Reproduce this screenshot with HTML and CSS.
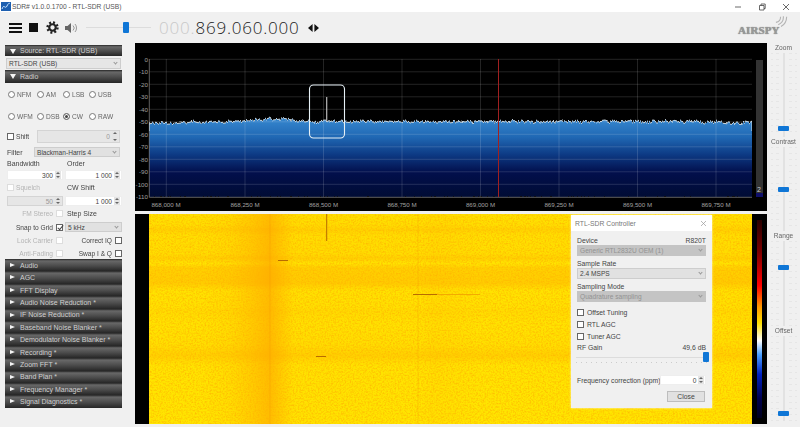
FILE: index.html
```html
<!DOCTYPE html>
<html lang="en">
<head>
<meta charset="utf-8">
<title>SDR#</title>
<link rel="stylesheet" href="styles.css">
</head>
<body>
<div class="app">
  <header class="titlebar">
    <svg class="appicon" viewBox="0 0 10 9"><rect width="10" height="9" fill="#1d5fb0"/><path d="M1 7 C3 1 4 8 6 4 S8 2 9 1" fill="none" stroke="#cfe6ff" stroke-width="1"/></svg>
    <span class="titletext">SDR# v1.0.0.1700 - RTL-SDR (USB)</span>
    <div class="winctl">
      <svg viewBox="0 0 8 8"><path d="M1 4H7" stroke="#444" stroke-width=".8"/></svg>
      <svg viewBox="0 0 8 8"><path d="M1.5 2.5H6V7H1.5ZM3 2.5V1H7.2V5.5H6" fill="none" stroke="#444" stroke-width=".8"/></svg>
      <svg viewBox="0 0 8 8"><path d="M1 1L7 7M7 1L1 7" stroke="#444" stroke-width=".8"/></svg>
    </div>
  </header>

  <div class="toolbar">
    <svg class="ic-menu" viewBox="0 0 13 10"><path d="M0 1H13M0 5H13M0 9H13" stroke="#111" stroke-width="2"/></svg>
    <div class="ic-stop"></div>
    <svg class="ic-gear" viewBox="0 0 12 12"><circle cx="6" cy="6" r="4.6" fill="none" stroke="#222" stroke-width="2.2" stroke-dasharray="1.8 1.8"/><circle cx="6" cy="6" r="3" fill="none" stroke="#222" stroke-width="2"/></svg>
    <svg class="ic-spk" viewBox="0 0 13 12"><path d="M0 4H2.5L6 1V11L2.5 8H0Z" fill="#666"/><path d="M8 3.5A3.5 3.5 0 0 1 8 8.5M10 2A6 6 0 0 1 10 10" fill="none" stroke="#999" stroke-width="1"/></svg>
    <div class="vol"><div class="vol-thumb"></div></div>
    <div class="freq"><span class="freq-dim">000.</span>869.060.000</div>
    <svg class="ic-arrows" viewBox="0 0 11 8"><path d="M0 4L4.6 0V8ZM11 4L6.4 0V8Z" fill="#111"/></svg>
    <div class="logo">
      <span class="logo-text">AIRSPY</span>
      <svg class="logo-waves" viewBox="0 0 14 14"><path d="M1 9A6 6 0 0 0 6 3M3.5 11.5A9 9 0 0 0 9 2.5M6.5 13.5A12 12 0 0 0 12.5 3" fill="none" stroke="#b4b4b4" stroke-width="1.2"/></svg>
    </div>
  </div>

  <div class="main">
    <aside class="left">
      <div class="hdr hdr-open hdr-first"><i class="tri-down"></i>Source: RTL-SDR (USB)</div>
      <div class="combo combo-source">RTL-SDR (USB)<b></b></div>
      <div class="hdr hdr-open hdr-radio"><i class="tri-down"></i>Radio</div>

      <div class="radios">
        <label class="rd"><i></i>NFM</label><label class="rd"><i></i>AM</label><label class="rd"><i></i>LSB</label><label class="rd"><i></i>USB</label>
        <label class="rd"><i></i>WFM</label><label class="rd"><i></i>DSB</label><label class="rd on"><i></i>CW</label><label class="rd"><i></i>RAW</label>
      </div>

      <div class="row row-shift"><label class="cb"><i></i>Shift</label><div class="num num-off grow">0<s></s></div></div>
      <div class="row row-filter"><span class="filter-l">Filter</span><div class="combo grow">Blackman-Harris 4<b></b></div></div>
      <div class="pair row-lab"><span>Bandwidth</span><span class="indent">Order</span></div>
      <div class="pair row-num"><div class="num">300<s></s></div><div class="num">1 000<s></s></div></div>
      <div class="pair row-lab2"><label class="cb cb-dis"><i></i>Squelch</label><span class="indent">CW Shift</span></div>
      <div class="pair row-num2"><div class="num num-off">50<s></s></div><div class="num">1 000<s></s></div></div>
      <div class="pair row-lab3"><label class="cb cb-rev cb-dis"><i></i>FM Stereo</label><span class="indent">Step Size</span></div>
      <div class="pair row-snap"><label class="cb cb-rev cb-on"><i></i>Snap to Grid</label><div class="combo">5 kHz<b></b></div></div>
      <div class="pair row-lab4"><label class="cb cb-rev cb-dis"><i></i>Lock Carrier</label><label class="cb cb-rev"><i></i>Correct IQ</label></div>
      <div class="pair row-lab4"><label class="cb cb-rev cb-dis"><i></i>Anti-Fading</label><label class="cb cb-rev"><i></i>Swap I &amp; Q</label></div>

      <div class="hdrs">
        <div class="hdr"><i class="tri-right"></i>Audio</div>
        <div class="hdr"><i class="tri-right"></i>AGC</div>
        <div class="hdr"><i class="tri-right"></i>FFT Display</div>
        <div class="hdr"><i class="tri-right"></i>Audio Noise Reduction *</div>
        <div class="hdr"><i class="tri-right"></i>IF Noise Reduction *</div>
        <div class="hdr"><i class="tri-right"></i>Baseband Noise Blanker *</div>
        <div class="hdr"><i class="tri-right"></i>Demodulator Noise Blanker *</div>
        <div class="hdr"><i class="tri-right"></i>Recording *</div>
        <div class="hdr"><i class="tri-right"></i>Zoom FFT *</div>
        <div class="hdr"><i class="tri-right"></i>Band Plan *</div>
        <div class="hdr"><i class="tri-right"></i>Frequency Manager *</div>
        <div class="hdr"><i class="tri-right"></i>Signal Diagnostics *</div>
      </div>
    </aside>

    <section class="center">
      <svg class="spectrum" viewBox="135 43 632 168">
        <defs>
          <linearGradient id="blue" x1="0" y1="120" x2="0" y2="197" gradientUnits="userSpaceOnUse">
            <stop offset="0" stop-color="#3484cc"/><stop offset=".22" stop-color="#2068b4"/><stop offset=".45" stop-color="#0d3a84"/><stop offset=".68" stop-color="#020f4c"/><stop offset="1" stop-color="#000c34"/>
          </linearGradient>
          <clipPath id="topclip"><rect x="149" y="59" width="603" height="72"/></clipPath>
          <filter id="jag" x="149" y="100" width="603" height="100" filterUnits="userSpaceOnUse" color-interpolation-filters="sRGB">
            <feTurbulence type="turbulence" baseFrequency=".7 .02" numOctaves="2" seed="8" result="n"/>
            <feColorMatrix in="n" type="matrix" values="0 0 0 0 .5  1.6 0 0 0 .1  0 0 0 0 0  0 0 0 0 1" result="m"/>
            <feDisplacementMap in="SourceGraphic" in2="m" scale="3" xChannelSelector="R" yChannelSelector="G"/>
          </filter>
          <polygon id="trace" points="149,124 153,123 157,123.5 161,122.5 165,123.5 169,123 173,123.5 177,122.5 181,122 185,123 189,122.5 193,121 197,122.5 201,123 205,122 209,122.5 213,122 217,121.5 221,122.5 225,122 229,121 233,121.5 237,122 241,121.5 245,120.5 249,121 253,120 257,119 261,120.5 265,119.5 269,118 273,120 277,119.5 281,119 285,118.5 289,119.5 293,120 297,121 301,120.5 305,122 309,121 313,122 317,122.5 321,121.5 325,121 329,122 333,120.5 337,122 341,121 345,122 349,122.5 353,121.5 357,122 361,121 365,121.5 369,120.5 373,122 377,121.5 381,122.5 385,121 389,122 393,122.5 397,121.5 401,122 405,121 409,121.5 413,122.5 417,121 421,122 425,121.5 429,122.5 433,121 437,122 441,121.5 445,120.5 449,122 453,121.5 457,122 461,121 465,122 469,121 473,122.5 477,121.5 481,122 485,121 489,122 493,121.5 497,122.5 501,121 505,122 509,121.5 513,120.5 517,122 521,121 525,122 529,121.5 533,122.5 537,121 541,122 545,121 549,122.5 553,121.5 557,122 561,120.5 565,122 569,121.5 573,122 577,121 581,122.5 585,121.5 589,122 593,120.5 597,122 601,121.5 605,121 609,122.5 613,121 617,122 621,121.5 625,122 629,120.5 633,122 637,121 641,122 645,121.5 649,122.5 653,121 657,122 661,121.5 665,120.5 669,122 673,121 677,122 681,121 685,122.5 689,121 693,122 697,121 701,122 705,123 709,121.5 713,122.5 717,121 721,122 725,122.5 729,123 733,123.5 737,123 741,123.5 745,122 749,123 752,121 752,197 149,197"/>
          <mask id="fillmask" maskUnits="userSpaceOnUse" x="149" y="59" width="603" height="139"><g filter="url(#jag)"><use href="#trace" fill="#fff"/></g></mask>
        </defs>
        <rect class="sp-bg" x="135" y="43" width="632" height="168"/>
        <rect x="149" y="100" width="603" height="97" fill="url(#blue)" mask="url(#fillmask)"/>
        <g class="grid">
          <path d="M149 59.3H752M149 71.8H752M149 84.3H752M149 96.8H752M149 109.3H752M149 121.8H752M149 134.3H752M149 146.8H752M149 159.3H752M149 171.8H752M149 184.3H752"/>
          <path d="M166.3 59V197M245 59V197M323.5 59V197M402 59V197M480.5 59V197M559 59V197M637.5 59V197M716 59V197"/>
        </g>
        <path class="axis" d="M149.3 59V197.3H752"/>
        <g clip-path="url(#topclip)"><g filter="url(#jag)"><use href="#trace" class="trace"/></g></g>
        <path class="spike" d="M326.7 97V121"/>
        <path class="redline" d="M498.5 59V197"/>
        <rect class="marker" x="309.5" y="85" width="35" height="53" rx="4"/>
        <g class="ylab">
          <text x="148" y="61.5">0</text><text x="148" y="74">-10</text><text x="148" y="86.5">-20</text><text x="148" y="99">-30</text><text x="148" y="111.5">-40</text><text x="148" y="124">-50</text><text x="148" y="136.5">-60</text><text x="148" y="149">-70</text><text x="148" y="161.5">-80</text><text x="148" y="174">-90</text><text x="148" y="186.5">-100</text><text x="148" y="199">-110</text>
        </g>
        <g class="xlab">
          <text x="166" y="207">868,000 M</text><text x="245" y="207">868,250 M</text><text x="323.5" y="207">868,500 M</text><text x="402" y="207">868,750 M</text><text x="480.5" y="207">869,000 M</text><text x="559" y="207">869,250 M</text><text x="637.5" y="207">869,500 M</text><text x="716" y="207">869,750 M</text>
        </g>
        <rect class="snr" x="756" y="60" width="7" height="137"/>
        <rect class="snr-low" x="756" y="193" width="7" height="4"/>
        <text class="snr-t" x="757" y="192">2</text>
      </svg>

      <svg class="waterfall" viewBox="135 214 632 210">
        <defs>
          <linearGradient id="vband" x1="149" x2="752" y1="0" y2="0" gradientUnits="userSpaceOnUse">
            <stop offset="0" stop-color="#ff9800" stop-opacity=".04"/><stop offset=".09" stop-color="#ff9800" stop-opacity=".05"/><stop offset=".135" stop-color="#ff9800" stop-opacity=".14"/><stop offset=".17" stop-color="#ff9800" stop-opacity=".34"/><stop offset=".2" stop-color="#ff9800" stop-opacity=".55"/><stop offset=".24" stop-color="#ff9800" stop-opacity=".08"/><stop offset=".45" stop-color="#ff9800" stop-opacity=".05"/><stop offset=".47" stop-color="#ff9800" stop-opacity=".12"/><stop offset=".55" stop-color="#ff9800" stop-opacity=".04"/><stop offset="1" stop-color="#ff9800" stop-opacity=".06"/>
          </linearGradient>
          <linearGradient id="hband" x1="0" x2="0" y1="214" y2="424" gradientUnits="userSpaceOnUse">
            <stop offset="0" stop-color="#ff9800" stop-opacity=".04"/><stop offset=".05" stop-color="#ff9800" stop-opacity=".08"/><stop offset=".075" stop-color="#ff9800" stop-opacity=".24"/><stop offset=".1" stop-color="#ff9800" stop-opacity=".08"/><stop offset=".19" stop-color="#ff9800" stop-opacity=".1"/><stop offset=".21" stop-color="#ff9800" stop-opacity=".26"/><stop offset=".235" stop-color="#ff9800" stop-opacity="0"/><stop offset=".255" stop-color="#ff9800" stop-opacity=".26"/><stop offset=".33" stop-color="#ff9800" stop-opacity=".32"/><stop offset=".365" stop-color="#ff9800" stop-opacity=".03"/><stop offset=".44" stop-color="#ff9800" stop-opacity=".05"/><stop offset=".46" stop-color="#ff9800" stop-opacity=".12"/><stop offset=".52" stop-color="#ff9800" stop-opacity=".03"/><stop offset=".62" stop-color="#ff9800" stop-opacity=".08"/><stop offset=".675" stop-color="#ff9800" stop-opacity=".26"/><stop offset=".72" stop-color="#ff9800" stop-opacity=".02"/><stop offset="1" stop-color="#ff9800" stop-opacity="0"/>
          </linearGradient>
          <linearGradient id="scale" x1="0" x2="0" y1="220" y2="418" gradientUnits="userSpaceOnUse">
            <stop offset="0" stop-color="#280000"/><stop offset=".16" stop-color="#7a0000"/><stop offset=".33" stop-color="#ff0000"/><stop offset=".44" stop-color="#ff9a00"/><stop offset=".52" stop-color="#ffe000"/><stop offset=".61" stop-color="#ffffff"/><stop offset=".68" stop-color="#4aa0ff"/><stop offset=".78" stop-color="#0020c0"/><stop offset=".9" stop-color="#000050"/><stop offset="1" stop-color="#00001c"/>
          </linearGradient>
          <filter id="noise" x="149" y="214" width="603" height="210" filterUnits="userSpaceOnUse" color-interpolation-filters="sRGB">
            <feTurbulence type="fractalNoise" baseFrequency="0.6" numOctaves="2" seed="5"/>
            <feColorMatrix type="matrix" values="0 0 0 0 1  0 0 0 0 .7  0 0 0 0 0  1.6 0 0 0 -.62"/>
          </filter>
        </defs>
        <rect class="sp-bg" x="135" y="214" width="632" height="210"/>
        <rect class="wf-base" x="149" y="214" width="603" height="210"/>
        <rect x="149" y="214" width="603" height="210" fill="url(#vband)"/>
        <rect x="149" y="214" width="603" height="210" fill="url(#hband)"/>
        <rect x="149" y="214" width="603" height="210" fill="#000" filter="url(#noise)"/>
        <path class="wf-line1" d="M418 214V424M270 214V424"/>
        <path class="wf-line3" d="M437 294.5H480"/>
        <path class="wf-line2" d="M326.7 214V241M278 260.5H288M316 356.5H326M413 294.5H437"/>
        <rect x="757" y="220" width="5" height="198" fill="url(#scale)"/>
      </svg>

      <div class="dialog">
        <div class="dlg-title"><span>RTL-SDR Controller</span><svg viewBox="0 0 7 7"><path d="M1 1L6 6M6 1L1 6" stroke="#999" stroke-width=".7"/></svg></div>
        <div class="dlg-body">
          <div class="dlg-line"><span>Device</span><span>R820T</span></div>
          <div class="combo combo-dis">Generic RTL2832U OEM (1)<b></b></div>
          <div class="dlg-line dlg-gap"><span>Sample Rate</span></div>
          <div class="combo">2.4 MSPS<b></b></div>
          <div class="dlg-line dlg-gap"><span>Sampling Mode</span></div>
          <div class="combo combo-dis">Quadrature sampling<b></b></div>
          <label class="cb dlg-cb dlg-cb1"><i></i>Offset Tuning</label>
          <label class="cb dlg-cb"><i></i>RTL AGC</label>
          <label class="cb dlg-cb"><i></i>Tuner AGC</label>
          <div class="dlg-line"><span>RF Gain</span><span>49,6 dB</span></div>
          <div class="hslider"><div class="hthumb"></div></div>
          <div class="dlg-line dlg-freq"><span class="nowrap">Frequency correction (ppm)</span><div class="num num-ppm">0<s></s></div></div>
          <button class="close" type="button">Close</button>
        </div>
      </div>
    </section>

    <aside class="right">
      <div class="vlabel">Zoom</div><div class="vtrack t84"><div class="vthumb th-zoom"></div></div>
      <div class="vlabel">Contrast</div><div class="vtrack t84"><div class="vthumb th-contrast"></div></div>
      <div class="vlabel">Range</div><div class="vtrack t85"><div class="vthumb th-range"></div></div>
      <div class="vlabel">Offset</div><div class="vtrack t85"><div class="vthumb th-offset"></div></div>
    </aside>
  </div>
</div>
</body>
</html>
```

FILE: styles.css
```css
* { box-sizing: border-box; }
html, body { margin: 0; padding: 0; }
body { width: 800px; height: 427px; overflow: hidden; font-family: "Liberation Sans", Arial, sans-serif; font-size: 7px; color: #444; background: #f0f0f0; }
.app { width: 800px; height: 427px; display: flex; flex-direction: column; filter: blur(.3px); }
.nowrap { white-space: nowrap; }

.titlebar { height: 12px; flex: none; background: #fff; display: flex; align-items: center; padding-left: 1px; }
.appicon { width: 10px; height: 9px; }
.titletext { margin-left: 1px; font-size: 6.7px; color: #555; }
.winctl { margin-left: auto; display: flex; gap: 16px; padding-right: 10px; padding-top: 1px; }
.winctl svg { width: 8px; height: 8px; }

.toolbar { height: 31px; flex: none; display: flex; align-items: center; padding-left: 9px; background: #f0f0f0; }
.ic-menu { width: 13px; height: 10px; }
.ic-stop { width: 9px; height: 9px; background: #111; margin-left: 7px; }
.ic-gear { width: 13px; height: 13px; margin-left: 8px; }
.ic-spk { width: 13px; height: 12px; margin-left: 6px; }
.vol { position: relative; width: 65px; height: 1px; background: #dcdcdc; margin-left: 8px; }
.vol-thumb { position: absolute; left: 37px; top: -5px; width: 6px; height: 11px; background: #0f76d6; border-radius: 1px; }
.freq { margin-left: 8px; font-family: "Open Sans", sans-serif; font-size: 17px; font-weight: 300; letter-spacing: .8px; color: #222; white-space: nowrap; width: 148px; }
.freq-dim { color: #c8c8c8; }
.ic-arrows { width: 11px; height: 8px; margin-left: 1px; }
.logo { position: relative; margin-left: auto; margin-right: 20px; margin-top: -2px; width: 42px; height: 18px; }
.logo-text { position: absolute; left: 0; bottom: 0; font-family: "Liberation Serif", serif; font-weight: 700; font-size: 11px; line-height: 12px; letter-spacing: .1px; color: #999; text-shadow: 0 0 1px #666; }
.logo-waves { position: absolute; right: -8px; top: -4px; width: 13px; height: 13px; }

.main { flex: 1; display: flex; min-height: 0; }
.left { width: 135px; flex: none; padding: 0 13px 0 5px; display: flex; flex-direction: column; }
.hdr { height: 12.42px; flex: none; display: flex; align-items: center; padding-left: 15px; font-size: 7px; color: #d0d0d0; background: linear-gradient(#252525 0, #686868 16%, #4c4c4c 55%, #262626 100%); position: relative; white-space: nowrap; }
.hdr-first { margin-top: 2px; height: 11px; }
.hdr-radio { margin-top: 1px; height: 13px; }
.tri-down, .tri-right { position: absolute; display: block; width: 0; height: 0; }
.tri-down { left: 5px; top: 4px; border-left: 3px solid transparent; border-right: 3px solid transparent; border-top: 5px solid #f4f4f4; }
.tri-right { left: 5px; top: 4px; border-top: 2.5px solid transparent; border-bottom: 2.5px solid transparent; border-left: 5px solid #f4f4f4; }

.combo { position: relative; height: 10px; background: #e1e1e1; border: 1px solid #cdcdcd; display: flex; align-items: center; padding-left: 2px; font-size: 6.6px; color: #444; white-space: nowrap; }
.combo b { position: absolute; right: 3px; top: 2px; width: 3px; height: 3px; border-right: 1px solid #999; border-bottom: 1px solid #999; transform: rotate(45deg); }
.combo-source { margin: 2px 1px 0 1px; height: 11px; background: #e6e6e6; }
.combo-dis { background: #c4c4c4; border-color: #c4c4c4; color: #929292; }

.radios { height: 44px; flex: none; padding-left: 3px; display: grid; grid-template-columns: 29px 26px 26px 1fr; grid-template-rows: 22px 22px; align-items: center; }
.rd { display: flex; align-items: center; gap: 2px; color: #666; font-size: 6.6px; }
.rd i { width: 7px; height: 7px; border-radius: 50%; border: 1px solid #777; background: #fff; display: block; flex: none; }
.rd.on i { background: #444; box-shadow: inset 0 0 0 1px #fff; }

.row { display: flex; align-items: center; flex: none; }
.grow { flex: 1; }
.cb { display: flex; align-items: center; gap: 2px; font-size: 6.6px; color: #444; white-space: nowrap; }
.cb i { width: 7px; height: 7px; display: block; flex: none; background: #fff; border: 1px solid #666; position: relative; }
.cb-rev { flex-direction: row-reverse; justify-content: flex-start; gap: 3px; }
.cb-dis { color: #b4b4b4; }
.cb-dis i { border-color: #ddd; }
.cb-on i::after { content: ""; position: absolute; left: 1.5px; top: -1px; width: 2px; height: 5px; border-right: 1px solid #444; border-bottom: 1px solid #444; transform: rotate(40deg); }

.num { position: relative; height: 10px; background: #fff; border: 1px solid #eee; display: flex; align-items: center; justify-content: flex-end; padding-right: 9px; font-size: 6.6px; color: #444; }
.num s { position: absolute; right: 1px; top: 0; bottom: 0; width: 6px; background: #e4e4e4; }
.num s::before { content: ""; position: absolute; left: 1px; top: 1px; border-left: 2px solid transparent; border-right: 2px solid transparent; border-bottom: 2.5px solid #666; }
.num s::after { content: ""; position: absolute; left: 1px; bottom: 1px; border-left: 2px solid transparent; border-right: 2px solid transparent; border-top: 2.5px solid #666; }
.num-off { background: #e6e6e6; border-color: #d4d4d4; color: #999; }

.row-shift { margin-top: 3px; height: 13px; padding: 0 2px; gap: 8px; }
.row-shift .num { height: 13px; }
.row-filter { margin-top: 4px; height: 10px; padding: 0 2px; }
.filter-l { width: 27px; }
.pair { display: grid; grid-template-columns: 56px 57px; gap: 0 2px; padding-left: 2px; align-items: center; flex: none; }
.indent { padding-left: 2px; }
.row-lab { margin-top: 1px; height: 10px; }
.row-num { margin-top: 2px; height: 10px; }
.row-num .num, .row-num2 .num { height: 10px; }
.row-lab2 { margin-top: 2px; height: 10px; }
.row-num2 { margin-top: 4px; height: 10px; }
.row-lab3 { margin-top: 2px; height: 10px; }
.row-snap { margin-top: 4px; height: 10px; }
.row-lab4 { margin-top: 3px; height: 10px; }
.hdrs { margin-top: 1px; display: flex; flex-direction: column; }

.center { position: relative; width: 632px; flex: none; display: flex; flex-direction: column; }
.spectrum { display: block; width: 632px; height: 168px; flex: none; }
.waterfall { display: block; width: 632px; height: 210px; flex: none; margin-top: 3px; }
.sp-bg { fill: #000; }
.grid path { stroke: #fff; stroke-opacity: .2; stroke-width: .7; fill: none; }
.axis { stroke: #777; stroke-width: .8; fill: none; }
.trace { fill: none; stroke: #e2ecf2; stroke-width: .9; }
.spike { stroke: #b8b8b8; stroke-width: 1.2; fill: none; }
.redline { stroke: #a02020; stroke-width: 1; }
.marker { fill: none; stroke: #e6f0f6; stroke-width: 1.1; }
.ylab text { fill: #a0a0a0; font-size: 6.2px; text-anchor: end; }
.xlab text { fill: #a0a0a0; font-size: 6.2px; text-anchor: middle; }
.snr { fill: #333; }
.snr-low { fill: #10106a; }
.snr-t { fill: #ccc; font-size: 7px; }
.wf-base { fill: #ffe900; }
.wf-line1 { stroke: #f09000; stroke-width: .6; fill: none; opacity: .45; }
.wf-line2 { stroke: #b86c00; stroke-width: 1; fill: none; }
.wf-line3 { stroke: #f0a000; stroke-width: .8; fill: none; }

.dialog { position: absolute; left: 436px; top: 172px; width: 141px; height: 193px; background: #f0f0f0; box-shadow: 0 0 2px rgba(255,255,255,.8); display: flex; flex-direction: column; }
.dlg-title { height: 16px; flex: none; background: #fff; display: flex; align-items: center; justify-content: space-between; padding: 0 5px 0 4px; font-size: 6.8px; color: #777; }
.dlg-title svg { width: 7px; height: 7px; }
.dlg-body { flex: 1; padding: 4px 6px 0 6px; display: flex; flex-direction: column; }
.dlg-line { display: flex; justify-content: space-between; align-items: center; height: 10px; flex: none; font-size: 6.8px; color: #444; }
.dlg-gap { margin-top: 2px; }
.dlg-body .combo { height: 11px; flex: none; }
.dlg-cb { height: 12px; flex: none; font-size: 6.8px; gap: 3px; }
.dlg-cb1 { margin-top: 4px; }
.hslider { position: relative; height: 1px; margin: 5px 0 17px -1px; background: #dcdcdc; width: 131px; flex: none; }
.hslider::after { content: ""; position: absolute; left: 0; right: 0; top: 5px; height: 1px; background: repeating-linear-gradient(90deg, #ccc 0 1px, transparent 1px 5px); }
.hthumb { position: absolute; right: -2px; top: -5px; width: 6px; height: 10px; background: #0f76d6; border-radius: 1px; z-index: 1; }
.dlg-freq { height: 10px; }
.num-ppm { width: 46px; height: 10px; flex: none; }
.close { margin: 6px 1px 0 auto; width: 38px; height: 11px; padding: 0; font: 6.8px "Liberation Sans", Arial, sans-serif; color: #444; background: #e1e1e1; border: 1px solid #bdbdbd; flex: none; }

.right { flex: 1; display: flex; flex-direction: column; align-items: center; }
.vlabel { height: 10px; flex: none; line-height: 10px; font-size: 6.6px; color: #666; text-align: center; }
.vtrack { position: relative; width: 26px; flex: none; background: linear-gradient(90deg, transparent 12px, #e2e2e2 12px, #e2e2e2 14px, transparent 14px), repeating-linear-gradient(90deg, transparent 0 2px, #f0f0f0 2px 5px, transparent 5px 8px, #f0f0f0 8px 18px, transparent 18px 21px, #f0f0f0 21px 24px, transparent 24px 26px), repeating-linear-gradient(#e6e6e6 0 1px, transparent 1px 6px); }
.t84 { height: 84px; }
.t85 { height: 85px; }
.vthumb { position: absolute; left: 7px; width: 11px; height: 5px; background: #0f76d6; border-radius: 1px; }
.th-zoom { top: 73px; }
.th-contrast { top: 40px; }
.th-range { top: 24px; }
.th-offset { top: 75px; }
```
